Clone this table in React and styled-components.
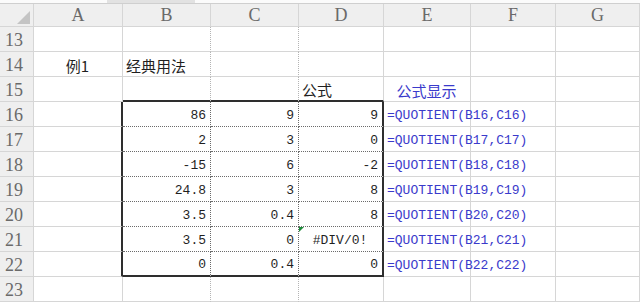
import React from "react";
import styled, { createGlobalStyle, css } from "styled-components";

const GlobalStyle = createGlobalStyle`
    html, body {
        margin: 0;
        padding: 0;
        background: #ffffff;
        overflow: hidden;
    }
`;

const GRID = "#d6d6d6";
const DOT = "#6b6b6b";
const DOT_LIGHT = "#b4b4b4";
const FRAME = "2px solid #2e2e2e";

const Page = styled.div`
    width: 640px;
    height: 308px;
    overflow: hidden;
    background: #fff;
`;

const TopStrip = styled.div`
    display: grid;
    grid-template-columns: 107px 88px 1fr;
    height: 3px;
    border-bottom: 1px solid #cfcfcf;
`;

const StripPart = styled.div`
    background: ${(p) => (p.$shade ? "#e2e2e2" : "#fbfbfb")};
`;

const Sheet = styled.div`
    display: grid;
    grid-template-columns: 34px 89px 88px 88px 85px 87px 85px 1fr;
    grid-template-rows: 23px repeat(11, 25px);
`;

const HeadCell = styled.div`
    box-sizing: border-box;
    background: #efefef;
    border-right: 1px solid ${GRID};
    border-bottom: 1px solid ${GRID};
    display: flex;
    align-items: center;
    justify-content: center;
    font-family: "Liberation Serif", serif;
    font-size: 18px;
    color: #6a6a6a;
    padding-top: 1px;
`;

const Corner = styled(HeadCell)`
    align-items: flex-end;
    justify-content: flex-end;
    padding: 0 3px 2px 0;
`;

const CornerMark = styled.div`
    width: 0;
    height: 0;
    border-left: 13px solid transparent;
    border-bottom: 13px solid #c4c4c4;
`;

const RowHead = styled(HeadCell)`
    justify-content: flex-start;
    padding: 3px 0 0 5px;
`;

// cell edge kinds: plain gridline, dotted line (dark inside the table, light outside) or table outline
const edge = (kind) => {
    if (kind === "frame") return FRAME;
    if (kind === "dot") return `1px dotted ${DOT}`;
    if (kind === "dotLight") return `1px dotted ${DOT_LIGHT}`;
    return `1px solid ${GRID}`;
};

const Cell = styled.div`
    position: relative;
    box-sizing: border-box;
    border-right: ${(p) => edge(p.$right)};
    border-bottom: ${(p) => edge(p.$bottom)};
    display: flex;
    align-items: flex-end;
    justify-content: ${(p) =>
        p.$align === "right" ? "flex-end" : p.$align === "center" ? "center" : "flex-start"};
    padding: 0 4px 4px 3px;
    white-space: nowrap;
    color: ${(p) => (p.$blue ? "#3a3acb" : "#1f1f1f")};
    ${(p) =>
        p.$mono
            ? css`
                  font-family: "Liberation Mono", monospace;
                  font-size: 13px;
                  line-height: 13px;
              `
            : css`
                  font-family: "Noto Sans CJK SC", sans-serif;
                  font-size: 15px;
                  line-height: 17px;
                  padding-bottom: 2px;
              `}
    ${(p) =>
        p.$flag &&
        css`
            &::before {
                content: "";
                position: absolute;
                top: 0;
                left: 0;
                border-top: 5px solid #1f8a3b;
                border-right: 5px solid transparent;
            }
        `}
`;

const columns = ["A", "B", "C", "D", "E", "F", "G"];

const data = [
    ["86", "9", "9"],
    ["2", "3", "0"],
    ["-15", "6", "-2"],
    ["24.8", "3", "8"],
    ["3.5", "0.4", "8"],
    ["3.5", "0", "#DIV/0!"],
    ["0", "0.4", "0"],
];

const emptyRow = (n, extra = {}, frameBelow = false) => (
    <React.Fragment key={n}>
        <RowHead>{n}</RowHead>
        {columns.map((c) => {
            const inTable = c === "B" || c === "C" || c === "D";
            return (
                <Cell
                    key={c}
                    $right={c === "B" || c === "C" ? "dotLight" : "grid"}
                    $bottom={frameBelow && inTable ? "frame" : "grid"}
                    {...(extra[c] || {})}
                >
                    {extra[c] && extra[c].text}
                </Cell>
            );
        })}
    </React.Fragment>
);

const App = () => {
    return (
        <Page>
            <GlobalStyle />
            <TopStrip>
                <StripPart />
                <StripPart $shade />
                <StripPart />
            </TopStrip>
            <Sheet>
                <Corner>
                    <CornerMark />
                </Corner>
                {columns.map((c) => (
                    <HeadCell key={c}>{c}</HeadCell>
                ))}

                {emptyRow(13)}
                {emptyRow(14, {
                    A: { text: "例1", $align: "center" },
                    B: { text: "经典用法" },
                })}
                {emptyRow(
                    15,
                    {
                        D: { text: "公式" },
                        E: { text: "公式显示", $align: "center", $blue: true },
                    },
                    true
                )}

                {data.map((row, i) => {
                    const n = 16 + i;
                    const bottom = i === data.length - 1 ? "frame" : "dot";
                    const isError = row[2].startsWith("#");
                    return (
                        <React.Fragment key={n}>
                            <RowHead>{n}</RowHead>
                            <Cell $right="frame" />
                            <Cell $mono $align="right" $right="dot" $bottom={bottom}>
                                {row[0]}
                            </Cell>
                            <Cell $mono $align="right" $right="dot" $bottom={bottom}>
                                {row[1]}
                            </Cell>
                            <Cell
                                $mono
                                $align={isError ? "center" : "right"}
                                $right="frame"
                                $bottom={bottom}
                                $flag={isError}
                            >
                                {row[2]}
                            </Cell>
                            <Cell $mono $blue>
                                {`=QUOTIENT(B${n},C${n})`}
                            </Cell>
                            <Cell />
                            <Cell />
                        </React.Fragment>
                    );
                })}

                {emptyRow(23)}
            </Sheet>
        </Page>
    );
};

export default App;
